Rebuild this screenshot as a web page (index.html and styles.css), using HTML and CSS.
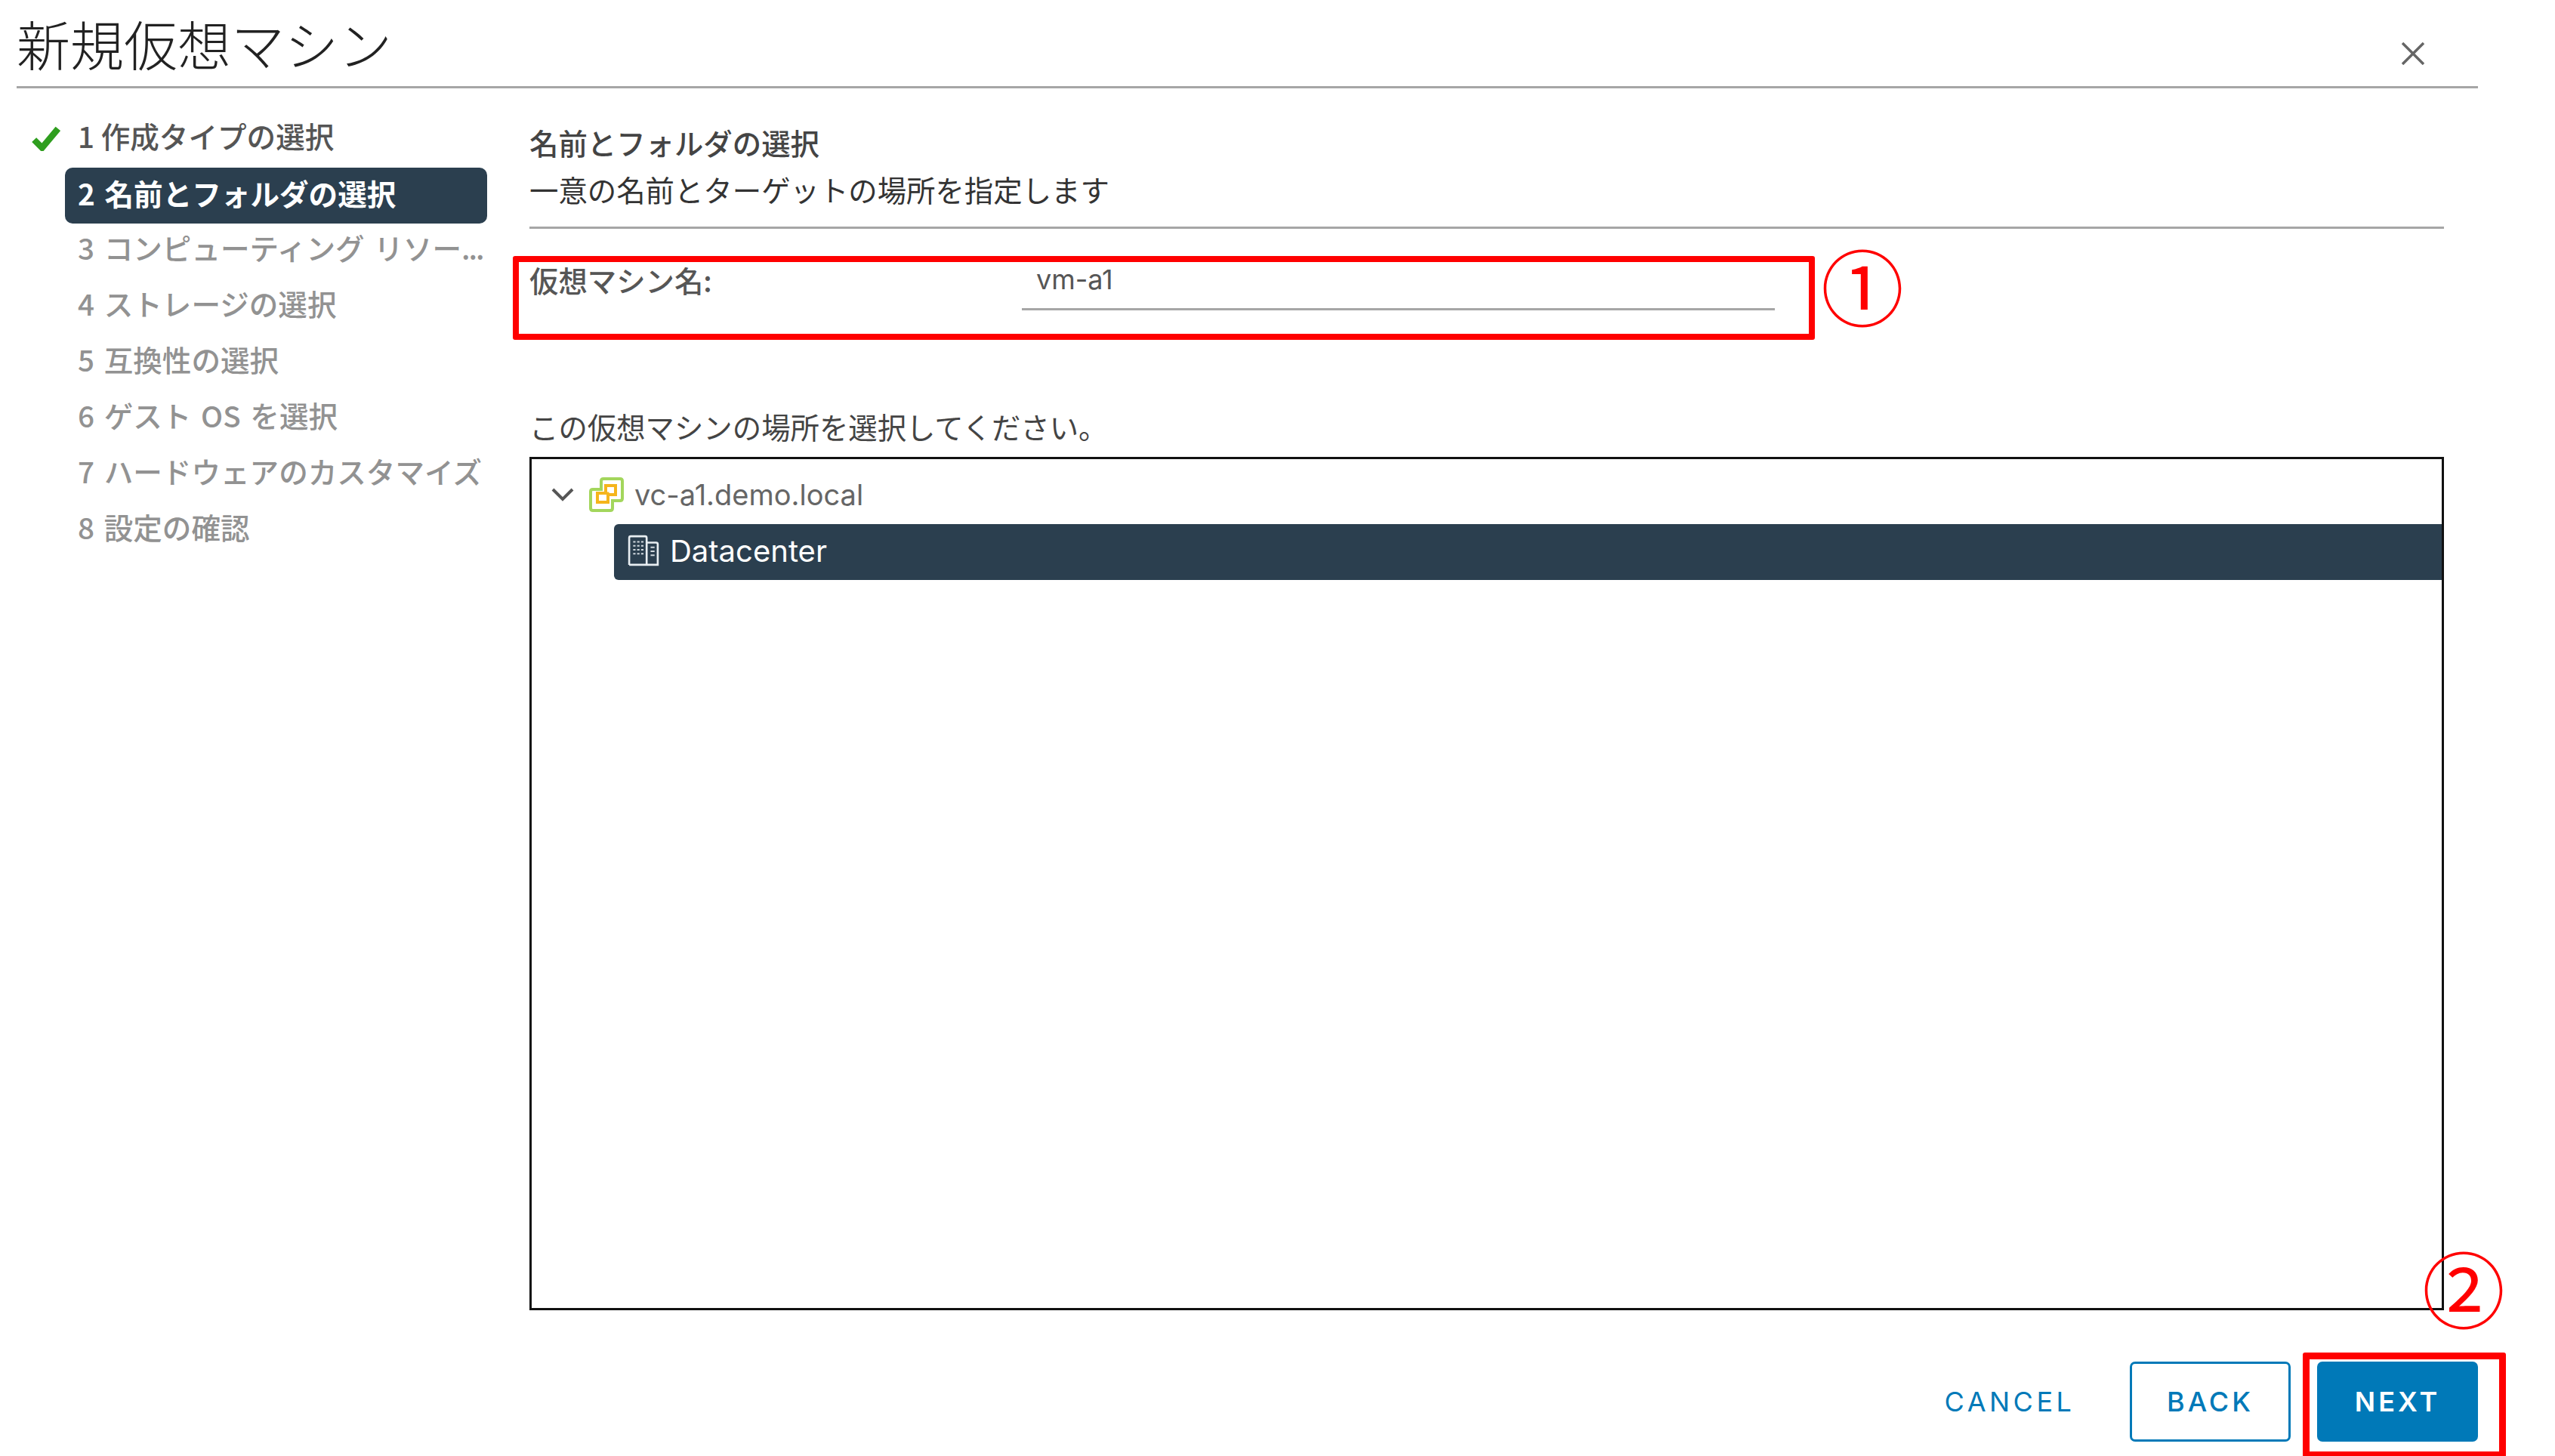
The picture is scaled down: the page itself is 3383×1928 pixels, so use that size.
FILE: index.html
```html
<!DOCTYPE html>
<html lang="ja">
<head>
<meta charset="utf-8">
<title>新規仮想マシン</title>
<link rel="stylesheet" href="styles.css">
</head>
<body>
<div class="dialog">
  <header class="head">
    <h1 class="title">新規仮想マシン</h1>
    <svg class="close" viewBox="0 0 30 30"><path d="M1 1L29 29M29 1L1 29"/></svg>
  </header>
  <div class="main">
    <nav class="steps">
      <div class="step done"><svg class="check" viewBox="0 0 36 32"><path d="M3 18L13 28L33 4"/></svg><span class="step-text">1 作成タイプの選択</span></div>
      <div class="step active"><span class="step-text">2 名前とフォルダの選択</span></div>
      <div class="step"><span class="step-text">3 コンピューティング リソー<span class="more">...</span></span></div>
      <div class="step"><span class="step-text">4 ストレージの選択</span></div>
      <div class="step"><span class="step-text">5 互換性の選択</span></div>
      <div class="step"><span class="step-text">6 ゲスト OS を選択</span></div>
      <div class="step"><span class="step-text">7 ハードウェアのカスタマイズ</span></div>
      <div class="step"><span class="step-text">8 設定の確認</span></div>
    </nav>
    <section class="content">
      <div class="intro">
        <h2 class="intro-title">名前とフォルダの選択</h2>
        <p class="intro-sub">一意の名前とターゲットの場所を指定します</p>
      </div>
      <div class="field">
        <label class="field-label">仮想マシン名:</label>
        <div class="field-input">vm-a1</div>
      </div>
      <p class="tree-label">この仮想マシンの場所を選択してください。</p>
      <div class="tree">
        <div class="tree-root">
          <svg class="chev" viewBox="0 0 30 18"><path d="M2 2L15 15L28 2"/></svg>
          <svg class="vc" viewBox="0 0 48 48">
            <path class="vc-outer" d="M20 3H42Q45 3 45 6V29Q45 32 42 32H32V42Q32 45 29 45H6Q3 45 3 42V20Q3 17 6 17H17V6Q17 3 20 3Z"/>
            <path class="vc-inner" d="M23 12H36V24H26V34H12V22H23Z"/>
            <path class="vc-mid" d="M23 22H26V25"/>
          </svg>
          <span class="root-name">vc-a1.demo.local</span>
        </div>
        <div class="tree-node">
          <svg class="dc" viewBox="0 0 40 40">
            <path d="M2 38V4Q2 2 4 2H22Q24 2 24 4V38M2 38H38V12Q38 10 36 10H24"/>
            <path class="dots" d="M7 9h3M12 9h3M17 9h3M7 14h3M12 14h3M17 14h3M7 19h3M12 19h3M17 19h3M7 24h3M12 24h3M17 24h3M29 16h5M29 21h5M29 26h5"/>
          </svg>
          <span class="node-name">Datacenter</span>
        </div>
      </div>
    </section>
  </div>
  <footer class="foot">
    <button class="btn btn-link">CANCEL</button>
    <button class="btn btn-outline">BACK</button>
    <button class="btn btn-primary">NEXT</button>
  </footer>
  <div class="mark mark-field"></div>
  <div class="mark mark-next"></div>
  <span class="num num-1">①</span>
  <span class="num num-2">②</span>
</div>
</body>
</html>
```
FILE: styles.css
```css
* { box-sizing: border-box; }
html, body { margin: 0; padding: 0; background: #fff; }
body { font-family: "Noto Sans CJK JP", "Noto Sans", sans-serif; color: #565656; }
.dialog { position: relative; width: 3383px; height: 1928px; padding: 0 102px 0 22px; overflow: hidden; display: flex; flex-direction: column; }
.head { height: 117px; border-bottom: 3px solid #a6a6a6; display: flex; align-items: flex-start; justify-content: space-between; }
.title { margin: 12px 0 0; font-size: 71px; line-height: 88px; font-weight: 300; color: #222; }
.close { width: 30px; height: 30px; margin: 56px 71px 0 0; }
.close path { stroke: #666; stroke-width: 3.5; fill: none; }
.main { flex: 1; display: flex; }
.steps { width: 679px; padding: 31px 0 0 64px; flex: none; }
.step { position: relative; height: 74px; width: 559px; padding: 0 6px 13px 17px; display: flex; align-items: center; font-size: 38.6px; font-weight: 500; word-spacing: 4px; color: #929292; }
.step-text { white-space: nowrap; }
.more { letter-spacing: -2px; }
.step.done { color: #555; word-spacing: 0; }
.step.active { background: #2b3f4f; color: #fff; border-radius: 10px; font-weight: 700; padding-bottom: 9px; }
.check { position: absolute; left: -44px; top: 18px; width: 38px; height: 34px; }
.check path { fill: none; stroke: #2f9e1f; stroke-width: 8; }
.content { width: 2535px; padding-top: 40px; flex: none; }
.intro { height: 146px; border-bottom: 3px solid #a6a6a6; }
.intro-title { margin: 0; font-size: 38.4px; line-height: 62px; font-weight: 500; color: #444; }
.intro-sub { margin: 0; font-size: 38.4px; line-height: 62px; font-weight: 400; color: #333; }
.field { display: flex; height: 110px; padding-top: 38px; }
.field-label { width: 652px; font-size: 38.4px; line-height: 58px; font-weight: 500; color: #565656; }
.field-input { width: 997px; height: 70px; border-bottom: 3px solid #a6a6a6; padding-left: 19px; font-family: Inter, sans-serif; font-size: 36px; line-height: 58px; color: #565656; }
.tree-label { margin: 122px 0 0; font-size: 38.4px; line-height: 58px; color: #444; }
.tree { height: 1130px; margin-top: 12px; border: 3px solid #111; }
.tree-root { height: 86px; display: flex; align-items: center; padding: 8px 0 0 26px; }
.chev { width: 30px; height: 18px; }
.chev path { fill: none; stroke: #565656; stroke-width: 4; }
.vc { width: 48px; height: 48px; margin-left: 19px; }
.vc-outer { fill: #fff; stroke: #a3d65c; stroke-width: 4; }
.vc-inner { fill: #fff; stroke: #f5b51c; stroke-width: 4; }
.vc-mid { fill: none; stroke: #f5b51c; stroke-width: 3; }
.root-name { margin-left: 13px; font-family: Inter, sans-serif; font-size: 38px; color: #666; }
.tree-node { height: 74px; margin-left: 109px; background: #2b3f4f; border-radius: 6px 0 0 6px; display: flex; align-items: center; padding: 0 0 4px 18px; }
.dc { width: 42px; height: 42px; }
.dc path { fill: none; stroke: #e8eef2; stroke-width: 2.5; }
.dc .dots { stroke-width: 2; stroke: #d0d8de; }
.node-name { margin-left: 14px; font-family: Inter, sans-serif; font-size: 40px; color: #fff; }
.foot { height: 193px; display: flex; align-items: flex-start; justify-content: flex-end; gap: 35px; padding-top: 68px; }
.btn { height: 106px; font-family: Inter, sans-serif; font-size: 36px; font-weight: 500; letter-spacing: 4px; border-radius: 7px; border: 3px solid #0079b8; background: #fff; color: #0079b8; width: 213px; padding: 0; }
.btn-link { border-color: transparent; background: transparent; width: 208px; margin-right: 20px; font-weight: 400; letter-spacing: 4.5px; }
.btn-primary { background: #0079b8; color: #fff; font-weight: 600; }
.mark { position: absolute; border: 8px solid #f00; border-radius: 3px; }
.mark-field { left: 679px; top: 339px; width: 1724px; height: 111px; }
.mark-next { left: 3049px; top: 1791px; width: 269px; height: 140px; border-width: 9px; }
.num { position: absolute; color: #f00; font-size: 110px; line-height: 110px; font-weight: 400; }
.num-1 { left: 2411px; top: 321px; }
.num-2 { left: 3207px; top: 1648px; }
```
